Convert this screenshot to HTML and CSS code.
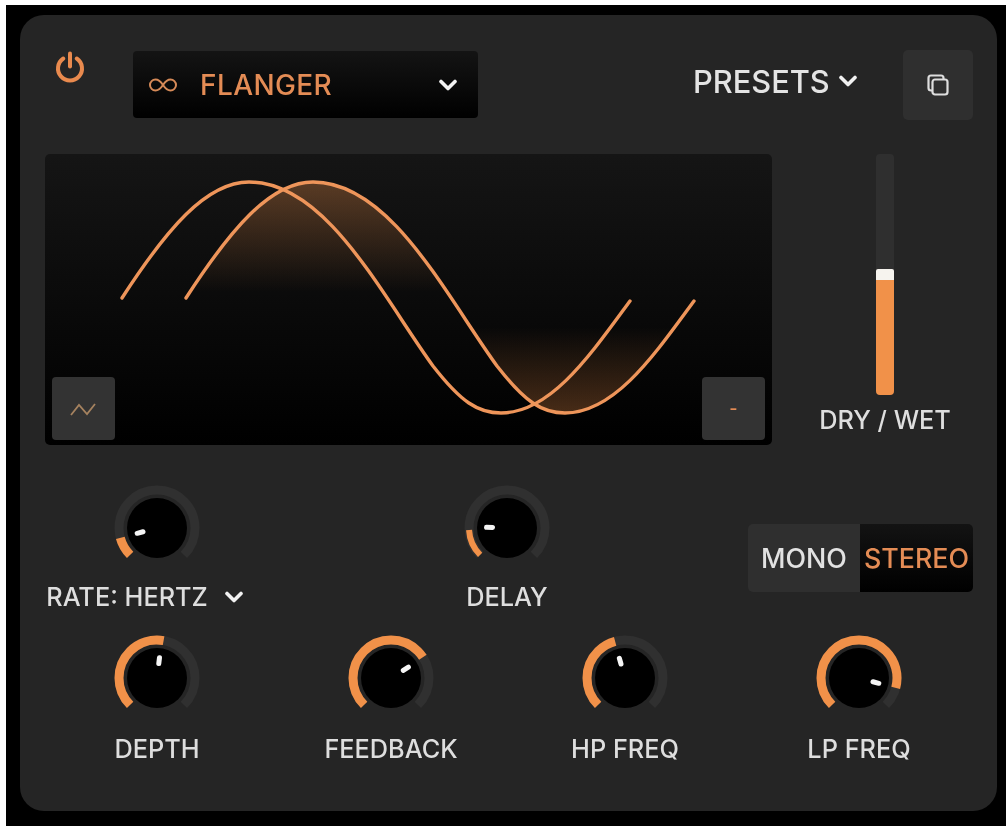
FILE: index.html
```html
<!DOCTYPE html>
<html lang="en">
<head>
<meta charset="utf-8">
<title>Flanger</title>
<link rel="stylesheet" href="styles.css">
</head>
<body>
<main class="frame">
  <section class="panel">
    <header class="top">
      <button class="power" aria-label="Power">
        <svg viewBox="0 0 32 32" width="32" height="32"><path d="M9.300 7.500a12 12 0 1 0 13.400 0" /><path d="M16 2.500v13" /></svg>
      </button>
      <div class="select">
        <svg class="inf" viewBox="0 0 30 14" width="30" height="14"><path d="M15 7C12 2.500 10 1.500 7.500 1.500a5.500 5.500 0 0 0 0 11C10 12.500 12 11.500 15 7C18 2.500 20 1.500 22.500 1.500a5.500 5.500 0 0 1 0 11C20 12.500 18 11.500 15 7Z"/></svg>
        <span class="select-name">FLANGER</span>
        <svg class="chev" viewBox="0 0 20 12" width="20" height="12"><path d="M3 2.500l7 7 7-7"/></svg>
      </div>
      <div class="presets">
        <span>PRESETS</span>
        <svg class="chev" viewBox="0 0 20 12" width="20" height="12"><path d="M3 2.500l7 7 7-7"/></svg>
      </div>
      <button class="copy" aria-label="Copy">
        <svg viewBox="0 0 26 26" width="26" height="26"><rect x="7.500" y="7.500" width="15" height="15" rx="2.500"/><path d="M7.500 18.500H6A2.500 2.500 0 0 1 3.500 16V6A2.500 2.500 0 0 1 6 3.500h10A2.500 2.500 0 0 1 18.500 6v1.500"/></svg>
      </button>
    </header>

    <div class="middle">
      <div class="display">
        <svg class="wave" viewBox="0 0 727 291" width="727" height="291">
          <defs>
            <linearGradient id="glow" gradientUnits="userSpaceOnUse" x1="0" y1="28" x2="0" y2="262">
              <stop offset="0" stop-color="#f19149" stop-opacity=".32"/>
              <stop offset=".47" stop-color="#f19149" stop-opacity="0"/>
              <stop offset=".62" stop-color="#f19149" stop-opacity="0"/>
              <stop offset="1" stop-color="#f19149" stop-opacity=".3"/>
            </linearGradient>
          </defs>
          <path class="fill" d="M141 144C185 76 225 28 268 28C345 28 400 140 452 212C480 248 497 259 520 259C570 259 610 200 649 147Z"/>
          <path class="line" d="M77 144C121 76 161 28 204 28C281 28 336 140 388 212C416 248 433 259 456 259C506 259 546 200 585 147"/>
          <path class="line" d="M141 144C185 76 225 28 268 28C345 28 400 140 452 212C480 248 497 259 520 259C570 259 610 200 649 147"/>
        </svg>
        <button class="tile" aria-label="Waveform">
          <svg viewBox="0 0 30 16" width="30" height="16"><path d="M2 14L10 4l8 9 8-10"/></svg>
        </button>
        <button class="tile tile-minus">-</button>
      </div>
      <div class="drywet">
        <div class="slider">
          <div class="slider-fill"></div>
        </div>
        <span class="label">DRY / WET</span>
      </div>
    </div>

    <div class="row-one">
      <div class="knob-wrap">
        <svg class="knob" viewBox="0 0 90 90" width="90" height="90"><circle class="track" cx="45" cy="45" r="38" pathLength="360" stroke-dasharray="270 90"/><circle class="value" cx="45" cy="45" r="38" pathLength="360" stroke-dasharray="30 330"/><circle class="cap" cx="45" cy="45" r="30"/><rect class="mark" x="42.500" y="22" width="5" height="11" rx="2.500" transform="rotate(-105 45 45)"/></svg>
        <div class="rate"><span class="label">RATE: HERTZ</span><svg class="chev" viewBox="0 0 20 12" width="20" height="12"><path d="M3 2.500l7 7 7-7"/></svg></div>
      </div>
      <div class="knob-wrap">
        <svg class="knob" viewBox="0 0 90 90" width="90" height="90"><circle class="track" cx="45" cy="45" r="38" pathLength="360" stroke-dasharray="270 90"/><circle class="value thin" cx="45" cy="45" r="38" pathLength="360" stroke-dasharray="42 318"/><circle class="cap" cx="45" cy="45" r="30"/><rect class="mark" x="42.500" y="22" width="5" height="11" rx="2.500" transform="rotate(-88 45 45)"/></svg>
        <span class="label">DELAY</span>
      </div>
      <div class="toggle">
        <span class="toggle-off">MONO</span>
        <span class="toggle-on">STEREO</span>
      </div>
    </div>

    <div class="row-two">
      <div class="knob-wrap">
        <svg class="knob" viewBox="0 0 90 90" width="90" height="90"><circle class="track" cx="45" cy="45" r="38" pathLength="360" stroke-dasharray="270 90"/><circle class="value" cx="45" cy="45" r="38" pathLength="360" stroke-dasharray="145 215"/><circle class="cap" cx="45" cy="45" r="30"/><rect class="mark" x="42.500" y="22" width="5" height="11" rx="2.500" transform="rotate(7 45 45)"/></svg>
        <span class="label">DEPTH</span>
      </div>
      <div class="knob-wrap">
        <svg class="knob" viewBox="0 0 90 90" width="90" height="90"><circle class="track" cx="45" cy="45" r="38" pathLength="360" stroke-dasharray="270 90"/><circle class="value" cx="45" cy="45" r="38" pathLength="360" stroke-dasharray="192 168"/><circle class="cap" cx="45" cy="45" r="30"/><rect class="mark" x="42.500" y="22" width="5" height="11" rx="2.500" transform="rotate(58 45 45)"/></svg>
        <span class="label">FEEDBACK</span>
      </div>
      <div class="knob-wrap">
        <svg class="knob" viewBox="0 0 90 90" width="90" height="90"><circle class="track" cx="45" cy="45" r="38" pathLength="360" stroke-dasharray="270 90"/><circle class="value" cx="45" cy="45" r="38" pathLength="360" stroke-dasharray="120 240"/><circle class="cap" cx="45" cy="45" r="30"/><rect class="mark" x="42.500" y="22" width="5" height="11" rx="2.500" transform="rotate(-16 45 45)"/></svg>
        <span class="label">HP FREQ</span>
      </div>
      <div class="knob-wrap">
        <svg class="knob" viewBox="0 0 90 90" width="90" height="90"><circle class="track" cx="45" cy="45" r="38" pathLength="360" stroke-dasharray="270 90"/><circle class="value" cx="45" cy="45" r="38" pathLength="360" stroke-dasharray="240 120"/><circle class="cap" cx="45" cy="45" r="30"/><rect class="mark" x="42.500" y="22" width="5" height="11" rx="2.500" transform="rotate(105 45 45)"/></svg>
        <span class="label">LP FREQ</span>
      </div>
    </div>
  </section>
</main>
</body>
</html>
```

FILE: styles.css
```css
* { box-sizing: border-box; }
html, body { margin: 0; height: 100%; background: #fff; }
body {
  width: 1006px;
  height: 826px;
  overflow: hidden;
  padding: 5px 0 0 6px;
  font-family: Inter, Roboto, "Liberation Sans", sans-serif;
  font-weight: 500;
  color: #dcdcdc;
}
button { border: 0; padding: 0; background: none; color: inherit; font: inherit; }
.frame {
  width: 1010px;
  height: 830px;
  background: #000;
  padding: 10px 19px 24px 14px;
  filter: blur(.6px);
}
.panel {
  height: 796px;
  background: #252525;
  border-radius: 24px;
  padding: 36px 24px 0 25px;
}
.top {
  display: flex;
  align-items: flex-start;
  height: 67px;
}
.power { width: 50px; height: 36px; margin: -2px 0 0 0; display: flex; justify-content: center; align-items: center; }
.power svg { fill: none; stroke: #e98a4e; stroke-width: 4; stroke-linecap: round; }
.select {
  width: 345px;
  height: 67px;
  margin-left: 38px;
  border-radius: 4px;
  background: linear-gradient(#141414, #000);
  display: flex;
  align-items: center;
  padding: 0 20px 0 15px;
  color: #e48c55;
  font-size: 28px;
  letter-spacing: .4px;
}
.inf { fill: none; stroke: #d68a58; stroke-width: 2; margin-right: 22px; }
.select-name { flex: 1; }
.chev { fill: none; stroke: #f2f2f2; stroke-width: 3.600; stroke-linecap: round; stroke-linejoin: round; flex: none; }
.presets {
  margin-left: 215px;
  height: 60px;
  display: flex;
  align-items: center;
  gap: 8px;
  font-size: 30.800px;
  color: #e4e4e4;
}
.copy {
  width: 70px;
  height: 70px;
  margin: -1px 0 0 auto;
  background: #2f2f2f;
  border-radius: 5px;
  display: flex;
  justify-content: center;
  align-items: center;
}
.copy svg { fill: none; stroke: #dedede; stroke-width: 2.200; }
.middle {
  display: flex;
  align-items: flex-start;
  margin-top: 36px;
}
.display {
  position: relative;
  flex: none;
  width: 727px;
  height: 291px;
  background: linear-gradient(#151515, #000);
  border-radius: 5px;
  overflow: hidden;
}
.wave { display: block; }
.line { fill: none; stroke: #ee955a; stroke-width: 3.400; stroke-linecap: round; }
.fill { fill: url(#glow); stroke: none; }
.tile {
  position: absolute;
  left: 7px;
  bottom: 5px;
  width: 63px;
  height: 63px;
  background: #333;
  border-radius: 4px;
  display: flex;
  justify-content: center;
  align-items: center;
}
.tile svg { fill: none; stroke: #a5825f; stroke-width: 1.800; }
.tile-minus {
  left: auto;
  right: 7px;
  color: #e48c55;
  font-size: 18px;
}
.drywet {
  flex: none;
  width: 180px;
  margin-left: 23px;
  display: flex;
  flex-direction: column;
  align-items: center;
}
.slider {
  position: relative;
  width: 18px;
  height: 241px;
  background: #2f2f2f;
  border-radius: 4px;
}
.slider-fill {
  position: absolute;
  left: 0;
  right: 0;
  bottom: 0;
  height: 126px;
  background: #f19149;
  border-top: 11px solid #f6f3ee;
  border-radius: 2px 2px 4px 4px;
}
.label { font-size: 25.300px; line-height: 30px; color: #dedede; white-space: nowrap; }
.drywet .label { margin-top: 10px; }
.row-one {
  display: grid;
  grid-template-columns: 234px 466px 1fr;
  margin: 38px 0 0 -5px;
  width: 933px;
}
.knob-wrap { display: flex; flex-direction: column; align-items: center; }
.knob { display: block; flex: none; }
.track { fill: none; stroke: #303030; stroke-width: 9; transform: rotate(135deg); transform-origin: 45px 45px; }
.value { fill: none; stroke: #f19149; stroke-width: 9; transform: rotate(135deg); transform-origin: 45px 45px; }
.value.thin { stroke-width: 6; }
.cap { fill: #000; }
.mark { fill: #f5f5f5; }
.rate { display: flex; align-items: center; gap: 16px; margin-top: 9px; padding-right: 24px; }
.row-one .knob-wrap > .label { margin-top: 9px; }
.toggle {
  display: flex;
  width: 225px;
  height: 68px;
  margin-top: 41px;
  justify-self: end;
  border-radius: 5px;
  overflow: hidden;
  font-size: 26.800px;
}
.toggle-off { width: 112px; background: #2f2f2f; display: flex; align-items: center; justify-content: center; color: #e2e2e2; }
.toggle-on { flex: 1; background: linear-gradient(#131313, #000); display: flex; align-items: center; justify-content: center; color: #e48c55; }
.row-two {
  display: grid;
  grid-template-columns: repeat(4, 234px);
  margin: 21px 0 0 -5px;
}
.row-two .label { margin-top: 11px; }
```
